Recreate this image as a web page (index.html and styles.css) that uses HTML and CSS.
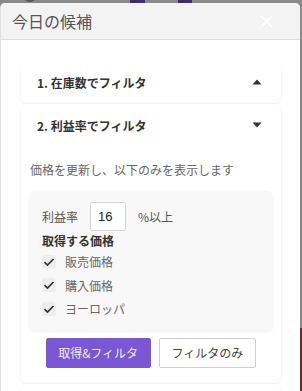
FILE: index.html
```html
<!DOCTYPE html>
<html lang="ja">
  <head>
    <meta charset="UTF-8">
    <title>今日の候補</title>
    <meta name="viewport" content="width=device-width, initial-scale=1">
    <link rel="stylesheet" href="styles.css">
  </head>
  <body>
    <div class="backdrop">
      <span class="bg-dot"></span>
      <span class="bg-block one"></span>
      <span class="bg-block two"></span>
    </div>
    <div class="modal">
      <div class="modal-header">
        <h2>今日の候補</h2>
        <button type="button" class="close" aria-label="close">
          <svg width="13" height="13" viewBox="0 0 13 13"><path d="M1 1L12 12M12 1L1 12" stroke="#fff" stroke-width="1.6" fill="none"/></svg>
        </button>
      </div>
      <div class="modal-body">
        <div class="card">
          <div class="card-head">
            <span>1. 在庫数でフィルタ</span>
            <svg class="caret" width="10" height="6" viewBox="0 0 10 6"><path d="M0.5 5.5L5 0.5L9.5 5.5Z" fill="#333"/></svg>
          </div>
        </div>

        <div class="card">
          <div class="card-head">
            <span>2. 利益率でフィルタ</span>
            <svg class="caret" width="10" height="6" viewBox="0 0 10 6"><path d="M0.5 0.5L5 5.5L9.5 0.5Z" fill="#333"/></svg>
          </div>
          <div class="card-body">
            <p class="note">価格を更新し、以下のみを表示します</p>
            <div class="options">
              <div class="rate-row">
                <label for="rate">利益率</label>
                <input type="text" id="rate" value="16">
                <span>%以上</span>
              </div>
              <div class="options-title">取得する価格</div>
              <div class="check-row">
                <span class="check"><svg width="12" height="10" viewBox="0 0 12 10"><path d="M1.5 5.2L4.5 8L10.5 2" stroke="#333" stroke-width="1.7" fill="none"/></svg></span>
                販売価格
              </div>
              <div class="check-row">
                <span class="check"><svg width="12" height="10" viewBox="0 0 12 10"><path d="M1.5 5.2L4.5 8L10.5 2" stroke="#333" stroke-width="1.7" fill="none"/></svg></span>
                購入価格
              </div>
              <div class="check-row">
                <span class="check"><svg width="12" height="10" viewBox="0 0 12 10"><path d="M1.5 5.2L4.5 8L10.5 2" stroke="#333" stroke-width="1.7" fill="none"/></svg></span>
                ヨーロッパ
              </div>
            </div>
            <div class="actions">
              <button type="button" class="btn primary">取得&amp;フィルタ</button>
              <button type="button" class="btn">フィルタのみ</button>
            </div>
          </div>
        </div>

        <div class="card"></div>
      </div>
    </div>
  </body>
</html>
```

FILE: styles.css
```css
* {
  box-sizing: border-box;
}

body {
  margin: 0;
  height: 391px;
  overflow: hidden;
  background: linear-gradient(to bottom, #8a8a8a 0, #8a8a8a 328px, #6e2a2a 328px);
  font-family: "Noto Sans CJK JP", "Noto Sans", sans-serif;
}

.backdrop {
  height: 3px;
  background: #8a8a8a;
  position: relative;
}

.bg-dot {
  position: absolute;
  left: 24px;
  top: -8px;
  width: 12px;
  height: 10px;
  border-radius: 50%;
  background: #555;
}

.bg-block {
  position: absolute;
  top: 0;
  height: 3px;
  background: #3f2a7a;
}

.bg-block.one {
  left: 130px;
  width: 15px;
}

.bg-block.two {
  left: 178px;
  width: 14px;
}

.modal {
  width: 300px;
  height: 388px;
  background: #fff;
  border-radius: 5px 5px 0 0;
  border-left: 1px solid #e2e2e2;
  overflow: hidden;
}

.modal-header {
  height: 37px;
  background: #f3f3f3;
  border-bottom: 1px solid #dcdcdc;
  display: flex;
  align-items: center;
  justify-content: space-between;
  padding: 0 27px 0 11px;
}

.modal-header h2 {
  margin: 0;
  font-size: 16px;
  font-weight: 400;
  color: #555;
}

.close {
  background: none;
  border: none;
  padding: 0;
  display: flex;
  margin-top: 1px;
}

.modal-body {
  padding: 21px 19px 0 20px;
  display: flex;
  flex-direction: column;
  gap: 1px;
}

.card {
  background: #fff;
  border-radius: 6px;
  box-shadow: 0 1px 3px rgba(0, 0, 0, 0.08);
  min-height: 42px;
}

.card-head {
  height: 42px;
  display: flex;
  align-items: center;
  justify-content: space-between;
  padding: 0 19px 0 16px;
  font-size: 12px;
  font-weight: 700;
  color: #333;
}

.card-body {
  padding: 15px 8px 15px 8px;
}

.note {
  margin: 0 0 12px 1px;
  font-size: 12px;
  line-height: 18px;
  color: #666;
}

.options {
  background: #f8f8f8;
  border-radius: 6px;
  box-shadow: 0 1px 3px rgba(0, 0, 0, 0.06);
  padding: 11px 13px 10px 13px;
  font-size: 12px;
  color: #555;
}

.rate-row {
  display: flex;
  align-items: center;
  gap: 12px;
}

.rate-row input {
  width: 36px;
  height: 29px;
  border: 1px solid #d4d4d4;
  border-radius: 2px;
  padding: 0 0 0 7px;
  font-family: "Liberation Sans", sans-serif;
  font-size: 13px;
  color: #222;
  background: #fff;
}

.options-title {
  margin-top: 1px;
  font-weight: 700;
  color: #333;
  line-height: 18px;
}

.check-row {
  display: flex;
  align-items: center;
  gap: 9px;
  height: 23.5px;
  color: #666;
}

.check {
  width: 14px;
  height: 14px;
  border-radius: 3px;
  background: #ededed;
  display: flex;
  align-items: center;
  justify-content: center;
}

.actions {
  display: flex;
  justify-content: center;
  gap: 8px;
  margin-top: 7px;
}

.btn {
  height: 30px;
  padding: 0 12px;
  font-family: "Noto Sans CJK JP", sans-serif;
  font-size: 12px;
  white-space: nowrap;
  color: #444;
  background: #fff;
  border: 1px solid #cfcfcf;
  border-radius: 2px;
}

.btn.primary {
  width: 105px;
  padding: 0;
  color: #eee;
  background: #7b57d4;
  border-color: #7b57d4;
}
```
